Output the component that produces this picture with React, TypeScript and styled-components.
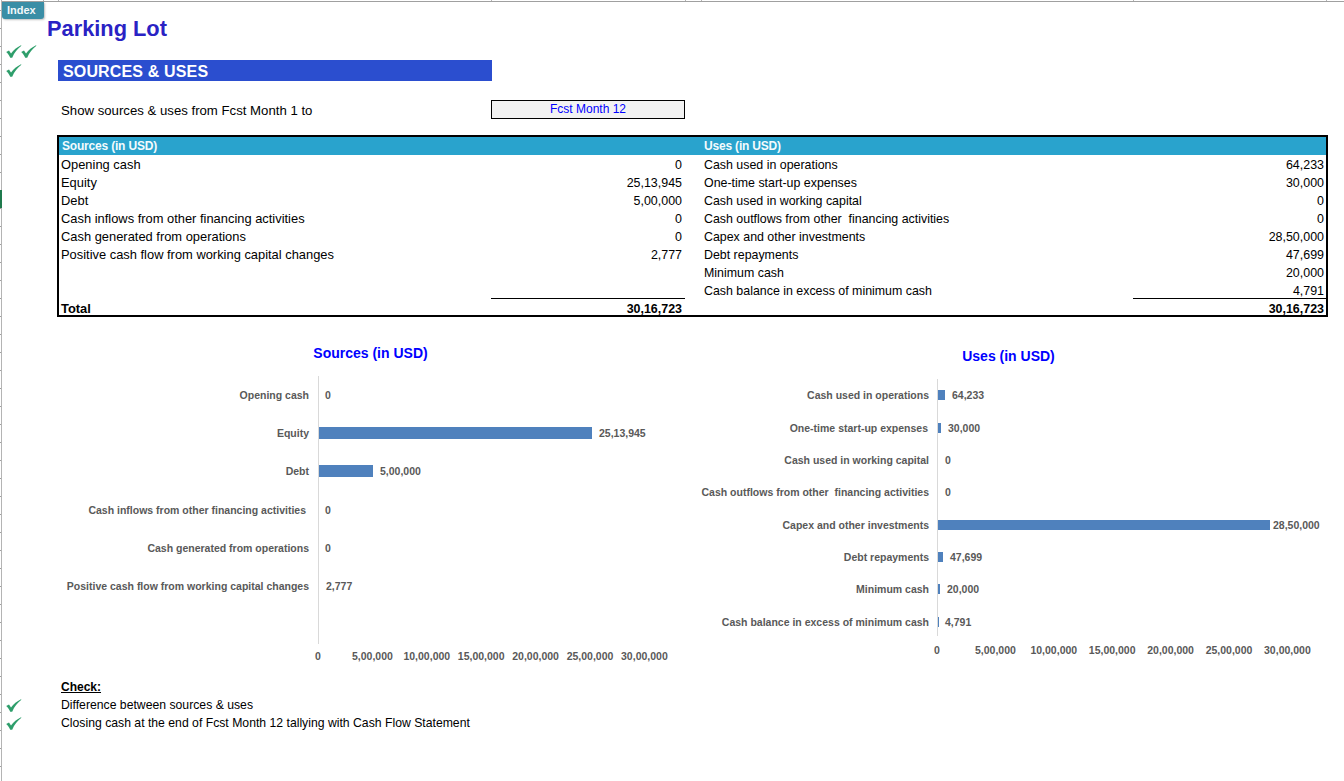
import React from "react";
import styled, { createGlobalStyle } from "styled-components";

const GlobalStyle = createGlobalStyle`
  html, body {
    margin: 0;
    padding: 0;
    background: #fff;
  }
  body {
    font-family: "Liberation Sans", Arial, sans-serif;
    color: #000;
  }
`;

const Page = styled.div`
  position: relative;
  width: 1344px;
  height: 781px;
  overflow: hidden;
  background: #fff;
  display: flex;
`;

const LeftRuler = styled.div`
  flex: 0 0 2px;
  height: 100%;
  background:
    linear-gradient(#1f7a4d, #1f7a4d) 0 190px / 2px 18px no-repeat,
    repeating-linear-gradient(to bottom, #a0a0a0 0 1px, transparent 1px 18px) 0 10px / 1px 100% no-repeat,
    linear-gradient(#b4b4b4, #b4b4b4) 1px 0 / 1px 100% no-repeat;
`;

const Sheet = styled.div`
  flex: 1;
  min-width: 0;
  display: flex;
  flex-direction: column;
`;

const TopRuler = styled.div`
  height: 2px;
  background:
    linear-gradient(#a0a0a0, #a0a0a0) 0 1px / 100% 1px no-repeat,
    linear-gradient(#b4b4b4, #b4b4b4) 41px 0 / 1px 1px no-repeat,
    linear-gradient(#b4b4b4, #b4b4b4) 56px 0 / 1px 1px no-repeat,
    linear-gradient(#b4b4b4, #b4b4b4) 489px 0 / 1px 1px no-repeat,
    linear-gradient(#b4b4b4, #b4b4b4) 683px 0 / 1px 1px no-repeat,
    linear-gradient(#b4b4b4, #b4b4b4) 699px 0 / 1px 1px no-repeat,
    linear-gradient(#b4b4b4, #b4b4b4) 1131px 0 / 1px 1px no-repeat,
    linear-gradient(#b4b4b4, #b4b4b4) 1324px 0 / 1px 1px no-repeat;
`;

const TitleRow = styled.div`
  height: 40px;
  display: flex;
  align-items: flex-start;
`;

const IndexTag = styled.div`
  width: 42px;
  height: 17px;
  padding-left: 5px;
  box-sizing: border-box;
  background: #3a8ea6;
  color: #f2f8fa;
  font-size: 11px;
  font-weight: 700;
  line-height: 16px;
  border-radius: 0 0 3px 3px;
  box-shadow: 1px 1px 2px rgba(0, 0, 0, 0.25);
`;

const Title = styled.h1`
  margin: 13px 0 0 3px;
  font-size: 21.8px;
  line-height: 28px;
  font-weight: 700;
  color: #2a22c4;
`;

const CheckRow = styled.div<{ $h?: number }>`
  display: flex;
  align-items: center;
  height: ${(p) => p.$h ?? 18}px;
`;

const Gutter = styled.div`
  flex: 0 0 56px;
  display: flex;
  padding-left: 4px;
  box-sizing: border-box;
  gap: 0;
`;

const SectionBand = styled.div`
  width: 434px;
  height: 21px;
  background: #2b4ecf;
  color: #fff;
  font-size: 16px;
  font-weight: 700;
  letter-spacing: 0.15px;
  line-height: 24px;
  padding-left: 5px;
  box-sizing: border-box;
`;

const ShowRow = styled.div`
  display: flex;
  align-items: center;
  height: 19px;
  margin: 19px 0 16px 59px;
  font-size: 13.2px;
`;

const ShowLabel = styled.div`
  width: 430px;
  padding-top: 2px;
`;

const SelectBox = styled.div`
  width: 194px;
  height: 19px;
  box-sizing: border-box;
  border: 1px solid #000;
  background: #f2f2f2;
  color: #0000ff;
  font-size: 12px;
  line-height: 16px;
  text-align: center;
`;

const Table = styled.div`
  margin-left: 55px;
  width: 1271px;
  height: 182px;
  box-sizing: border-box;
  border: 2px solid #000;
  display: grid;
  grid-template-columns: 432px 194px 448px 193px;
  grid-auto-rows: 18px;
`;

const HeadCell = styled.div<{ $inset?: number }>`
  background: #29a3cd;
  color: #f4fbfd;
  font-size: 12px;
  letter-spacing: -0.19px;
  font-weight: 700;
  line-height: 19px;
  padding-left: ${(p) => p.$inset ?? 3}px;
`;

const Cell = styled.div<{ $bold?: boolean }>`
  font-size: 12.9px;
  font-weight: ${(p) => (p.$bold ? 700 : 400)};
  line-height: 20px;
  white-space: pre;
  padding-left: 2px;
`;

const UseLabel = styled(Cell)`
  font-size: 12.4px;
  padding-left: 19px;
`;

const ValueCell = styled.div<{ $bold?: boolean; $rule?: boolean; $end?: number }>`
  font-size: 12.45px;
  font-weight: ${(p) => (p.$bold ? 700 : 400)};
  line-height: 20px;
  text-align: right;
  padding-right: ${(p) => p.$end ?? 3}px;
  ${(p) => p.$rule && "box-shadow: 0 -1px 0 #000;"}
`;

const Charts = styled.div`
  display: flex;
  height: 342px;
  margin-top: 18px;
`;

const ChartSvg = styled.svg`
  display: block;
  flex: none;
  font-family: "Liberation Sans", Arial, sans-serif;
  font-weight: 700;
`;

const ChartTitle = styled.text`
  font-size: 14px;
  fill: #0000ff;
`;

const AxisText = styled.text`
  font-size: 10.5px;
  fill: #595959;
`;

const Footer = styled.div`
  display: flex;
  flex-direction: column;
  margin-top: 1px;
  font-size: 12.22px;
`;

const CheckHeading = styled.div`
  height: 18px;
  margin-left: 59px;
  font-size: 12px;
  font-weight: 700;
  line-height: 18px;
  text-decoration: underline;
`;

const CheckText = styled.span`
  margin-left: 3px;
`;

const TickIcon = styled.svg`
  display: block;
  flex: none;
  margin-right: -1px;
`;

const Tick = () => (
  <TickIcon width="16" height="13" viewBox="0 0 16 13" aria-hidden="true">
    <path d="M0.2 7 L3 5.6 L5 8.6 C7.6 5 10.8 2.2 15 0.2 L15.4 0.8 C11.4 3.8 8.4 7.6 6.2 12.8 L4.2 12.8 C3.4 10.6 2 8.6 0.2 7 Z" fill="#2e9e6b" />
  </TickIcon>
);

const sources: [string, string][] = [
  ["Opening cash", "0"],
  ["Equity", "25,13,945"],
  ["Debt", "5,00,000"],
  ["Cash inflows from other financing activities", "0"],
  ["Cash generated from operations", "0"],
  ["Positive cash flow from working capital changes", "2,777"],
  ["", ""],
  ["", ""],
];

const uses: [string, string][] = [
  ["Cash used in operations", "64,233"],
  ["One-time start-up expenses", "30,000"],
  ["Cash used in working capital", "0"],
  ["Cash outflows from other  financing activities", "0"],
  ["Capex and other investments", "28,50,000"],
  ["Debt repayments", "47,699"],
  ["Minimum cash", "20,000"],
  ["Cash balance in excess of minimum cash", "4,791"],
];

type Bar = {
  label: string;
  value: string;
  y: number;
  labelX: number;
  valueX: number;
  width: number;
  height: number;
};

const sourceBars: Bar[] = [
  { label: "Opening cash", value: "0", y: 395, labelX: 309, valueX: 325, width: 0, height: 0 },
  { label: "Equity", value: "25,13,945", y: 433, labelX: 309, valueX: 599, width: 273, height: 12 },
  { label: "Debt", value: "5,00,000", y: 471, labelX: 309, valueX: 380, width: 54, height: 12 },
  { label: "Cash inflows from other financing activities", value: "0", y: 510, labelX: 306, valueX: 325, width: 0, height: 0 },
  { label: "Cash generated from operations", value: "0", y: 548, labelX: 309, valueX: 325, width: 0, height: 0 },
  { label: "Positive cash flow from working capital changes", value: "2,777", y: 586, labelX: 309, valueX: 326, width: 0, height: 0 },
];

const useBars: Bar[] = [
  { label: "Cash used in operations", value: "64,233", y: 395, labelX: 929, valueX: 952, width: 7, height: 10 },
  { label: "One-time start-up expenses", value: "30,000", y: 428, labelX: 928, valueX: 948, width: 3, height: 10 },
  { label: "Cash used in working capital", value: "0", y: 460, labelX: 929, valueX: 945, width: 0, height: 0 },
  { label: "Cash outflows from other  financing activities", value: "0", y: 492, labelX: 929, valueX: 945, width: 0, height: 0 },
  { label: "Capex and other investments", value: "28,50,000", y: 525, labelX: 929, valueX: 1273, width: 332, height: 10 },
  { label: "Debt repayments", value: "47,699", y: 557, labelX: 929, valueX: 950, width: 5, height: 10 },
  { label: "Minimum cash", value: "20,000", y: 589, labelX: 929, valueX: 947, width: 2, height: 10 },
  { label: "Cash balance in excess of minimum cash", value: "4,791", y: 622, labelX: 929, valueX: 945, width: 1, height: 10 },
];

const axisLabels = ["0", "5,00,000", "10,00,000", "15,00,000", "20,00,000", "25,00,000", "30,00,000"];

type BarChartProps = {
  title: string;
  titleX: number;
  titleY: number;
  originX: number;
  axisTop: number;
  axisBottom: number;
  axisY: number;
  step: number;
  offsetX: number;
  width: number;
  bars: Bar[];
};

// coordinates are page coordinates, the viewBox shifts them into the svg
const BarChart = ({ title, titleX, titleY, originX, axisTop, axisBottom, axisY, step, offsetX, width, bars }: BarChartProps) => (
  <ChartSvg width={width} height={342} viewBox={`${offsetX} 335 ${width} 342`}>
    <ChartTitle x={titleX} y={titleY} textAnchor="middle">
      {title}
    </ChartTitle>
    <line x1={originX + 0.5} x2={originX + 0.5} y1={axisTop} y2={axisBottom} stroke="#d9d9d9" />
    {bars.map((b) => (
      <g key={b.label}>
        <AxisText x={b.labelX} y={b.y + 4} textAnchor="end" xmlSpace="preserve">
          {b.label}
        </AxisText>
        {b.width > 0 && <rect x={originX + 1} y={b.y - b.height / 2} width={b.width} height={b.height} fill="#4f81bd" />}
        <AxisText x={b.valueX} y={b.y + 4}>
          {b.value}
        </AxisText>
      </g>
    ))}
    {axisLabels.map((t, i) => (
      <AxisText key={t} x={originX + i * step} y={axisY} textAnchor="middle">
        {t}
      </AxisText>
    ))}
  </ChartSvg>
);

export default function App() {
  return (
    <Page>
      <GlobalStyle />
      <LeftRuler />
      <Sheet>
        <TopRuler />
        <TitleRow>
          <IndexTag>Index</IndexTag>
          <Title>Parking Lot</Title>
        </TitleRow>
        <CheckRow>
          <Gutter>
            <Tick />
            <Tick />
          </Gutter>
        </CheckRow>
        <CheckRow $h={21}>
          <Gutter>
            <Tick />
          </Gutter>
          <SectionBand>SOURCES &amp; USES</SectionBand>
        </CheckRow>
        <ShowRow>
          <ShowLabel>Show sources &amp; uses from Fcst Month 1 to</ShowLabel>
          <SelectBox>Fcst Month 12</SelectBox>
        </ShowRow>
        <Table>
          <HeadCell>Sources (in USD)</HeadCell>
          <HeadCell />
          <HeadCell $inset={19}>Uses (in USD)</HeadCell>
          <HeadCell />
          {sources.map(([label, value], i) => (
            <React.Fragment key={uses[i][0]}>
              <Cell>{label}</Cell>
              <ValueCell>{value}</ValueCell>
              <UseLabel>{uses[i][0]}</UseLabel>
              <ValueCell $end={2}>{uses[i][1]}</ValueCell>
            </React.Fragment>
          ))}
          <Cell $bold>Total</Cell>
          <ValueCell $bold $rule>
            30,16,723
          </ValueCell>
          <Cell />
          <ValueCell $bold $rule $end={2}>
            30,16,723
          </ValueCell>
        </Table>
        <Charts>
          <BarChart
            title="Sources (in USD)"
            titleX={370.5}
            titleY={358}
            originX={318}
            axisTop={376}
            axisBottom={644}
            axisY={660}
            step={54.4}
            offsetX={2}
            width={680}
            bars={sourceBars}
          />
          <BarChart
            title="Uses (in USD)"
            titleX={1008.5}
            titleY={361}
            originX={937}
            axisTop={379}
            axisBottom={636}
            axisY={654}
            step={58.4}
            offsetX={682}
            width={662}
            bars={useBars}
          />
        </Charts>
        <Footer>
          <CheckHeading>Check:</CheckHeading>
          <CheckRow>
            <Gutter>
              <Tick />
            </Gutter>
            <CheckText>Difference between sources &amp; uses</CheckText>
          </CheckRow>
          <CheckRow>
            <Gutter>
              <Tick />
            </Gutter>
            <CheckText>Closing cash at the end of Fcst Month 12 tallying with Cash Flow Statement</CheckText>
          </CheckRow>
        </Footer>
      </Sheet>
    </Page>
  );
}
